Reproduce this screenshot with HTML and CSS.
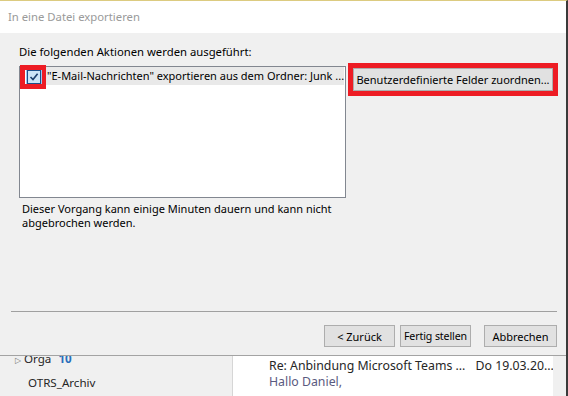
FILE: index.html
```html
<!DOCTYPE html>
<html lang="de">
<head>
    <meta charset="UTF-8">
    <meta name="viewport" content="width=device-width, initial-scale=1.0">
    <title>In eine Datei exportieren</title>
    <link rel="stylesheet" href="styles.css">
</head>
<body>

<div class="window">
    <div class="dialog">
        <div class="titlebar">In eine Datei exportieren</div>

        <div class="dialog-body">
            <p class="label">Die folgenden Aktionen werden ausgeführt:</p>

            <div class="actions-row">
                <div class="listbox">
                    <div class="list-item">
                        <span class="text-highlight">"E-Mail-Nachrichten" exportieren aus dem Ordner: Junk ...</span>
                        <!-- red marker drawn over the checkbox -->
                        <span class="marker check-marker">
                            <svg width="16" height="14" viewBox="0 0 16 14">
                                <rect x="0" y="0" width="16" height="14" fill="#9cc6ee"/>
                                <rect x="1.5" y="0.5" width="13" height="13" fill="#cce4f7" stroke="#1c4f8a"/>
                                <path d="M4.5 7 L7 9.6 L11.6 3.8" fill="none" stroke="#1c3f6e" stroke-width="1.6"/>
                            </svg>
                        </span>
                    </div>
                </div>

                <div class="marker button-marker">
                    <button class="btn btn-wide">Benutzerdefinierte Felder zuordnen...</button>
                </div>
            </div>

            <p class="note">Dieser Vorgang kann einige Minuten dauern und kann nicht<br>abgebrochen werden.</p>
        </div>

        <div class="dialog-footer">
            <div class="separator"></div>
            <div class="buttons">
                <button class="btn">&lt; Zurück</button>
                <button class="btn btn-tight">Fertig stellen</button>
                <button class="btn btn-cancel">Abbrechen</button>
            </div>
        </div>
    </div>

    <!-- Outlook window behind the dialog -->
    <div class="outlook">
        <div class="folders">
            <div class="folder folder-cut"><span class="arrow">&#9655;</span>Orga <span class="count">10</span></div>
            <div class="folder">OTRS_Archiv</div>
        </div>
        <div class="messages">
            <div class="msg-line msg-subject">
                <span>Re: Anbindung Microsoft Teams ...</span>
                <span class="msg-date">Do 19.03.20...</span>
            </div>
            <div class="msg-line msg-preview">Hallo Daniel,</div>
        </div>
        <div class="reading"></div>
    </div>
</div>

</body>
</html>
```

FILE: styles.css
```css
/* Basic reset */
* {
    margin: 0;
    padding: 0;
    box-sizing: border-box;
}

body {
    font-family: 'Segoe UI', 'Noto Sans', sans-serif;
    font-size: 11px;
    color: #000;
    background-color: #f0f0f0;
    width: 568px;
    height: 396px;
    overflow: hidden;
}

/* Outer window */
.window {
    width: 568px;
    height: 396px;
    border-top: 1px solid #dccb80;
    border-right: 2px solid #3a3a3a;
    display: flex;
    flex-direction: column;
}

/* Dialog */
.dialog {
    height: 355px;
    background-color: #f0f0f0;
    border-bottom: 1px solid #a3a3a3;
    display: flex;
    flex-direction: column;
}

.titlebar {
    height: 32px;
    line-height: 32px;
    padding-left: 8px;
    background-color: #fff;
    color: #9a9a9a;
    font-size: 11.3px;
}

.dialog-body {
    padding: 11px 0 0 19px;
}

.label {
    line-height: 15px;
    margin-bottom: 7px;
    font-size: 11.3px;
}

.actions-row {
    display: flex;
    align-items: flex-start;
}

.listbox {
    width: 327px;
    height: 132px;
    background-color: #fff;
    border: 1px solid #828790;
}

.list-item {
    position: relative;
    height: 19px;
    padding-left: 26px;
}

.text-highlight {
    display: block;
    width: 298px;
    height: 18px;
    line-height: 18px;
    padding-left: 1px;
    background-color: #e9e9e9;
    white-space: nowrap;
    overflow: hidden;
}

/* Red annotation boxes */
.marker {
    border: 5px solid #ed1c24;
}

.check-marker {
    position: absolute;
    left: 0;
    top: -2px;
    width: 26px;
    height: 24px;
    border-right-width: 4px;
    display: flex;
    align-items: center;
    justify-content: center;
}

.check-marker svg {
    display: block;
}

.button-marker {
    margin-left: 2px;
    margin-top: -3px;
}

/* Buttons */
.btn {
    font-family: inherit;
    font-size: inherit;
    color: #000;
    background-color: #e1e1e1;
    border: 1px solid #adadad;
    height: 22px;
    width: 71px;
    padding: 0;
    white-space: nowrap;
    display: block;
}

.btn-wide {
    width: 200px;
    height: 23px;
}

.btn-tight {
    font-size: 10.6px;
    letter-spacing: -0.1px;
}

.note {
    margin: 4px 0 0 3px;
    line-height: 14px;
}

/* Footer with wizard buttons */
.dialog-footer {
    margin-top: auto;
    padding: 0 9px 8px 11px;
}

.separator {
    height: 1px;
    background-color: #a0a0a0;
    margin-bottom: 13px;
}

.buttons {
    display: flex;
    justify-content: flex-end;
    gap: 5px;
}

.btn-cancel {
    width: 73px;
    margin-left: 8px;
}

/* Outlook behind the dialog */
.outlook {
    flex: 1;
    display: flex;
    overflow: hidden;
}

.folders {
    width: 233px;
    background-color: #f0f0f0;
    border-right: 1px solid #d6d6d6;
    font-size: 11.6px;
    color: #262626;
}

.folder {
    height: 24px;
    line-height: 24px;
    padding-left: 28px;
}

.folder-cut {
    margin-top: -9px;
    padding-left: 15px;
}

.arrow {
    font-size: 8px;
    color: #777;
    margin-right: 3px;
}

.count {
    color: #2a6ebb;
    font-weight: bold;
    margin-left: 4px;
}

.messages {
    width: 320px;
    background-color: #fff;
    padding: 2px 0 0 36px;
    font-size: 12.3px;
    color: #262626;
}

.msg-line {
    height: 16px;
    line-height: 16px;
    white-space: nowrap;
}

.msg-date {
    margin-left: 7px;
}

.msg-preview {
    color: #5a5a80;
}

.reading {
    flex: 1;
    background-color: #f0f0f0;
}
```
